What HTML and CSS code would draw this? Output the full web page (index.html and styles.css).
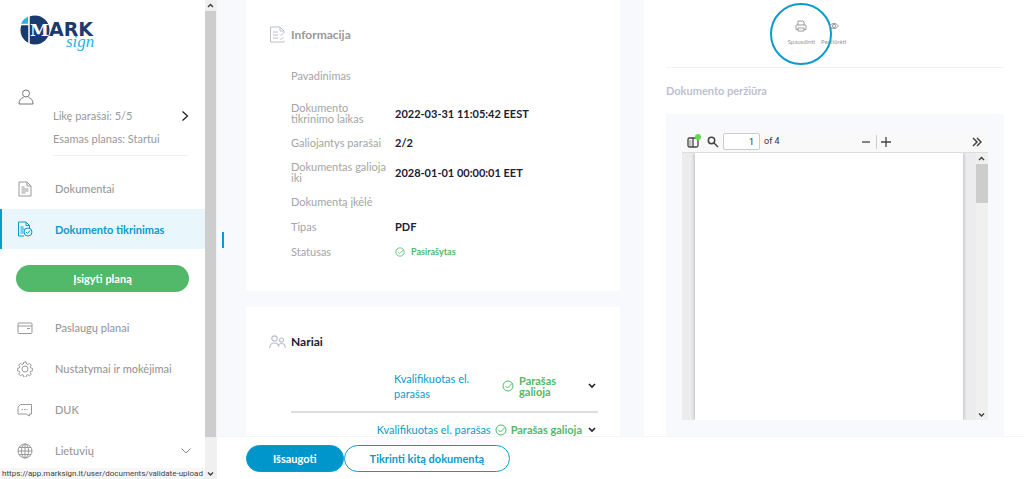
FILE: index.html
```html
<!DOCTYPE html>
<html lang="lt">
<head>
    <meta charset="UTF-8">
    <meta name="viewport" content="width=device-width, initial-scale=1.0">
    <title>MarkSign - Dokumento tikrinimas</title>
    <link rel="stylesheet" href="styles.css">
</head>
<body>
    <aside class="sidebar">
        <div class="sidebar-content">
            <a class="logo" href="#" aria-label="MarkSign">
                <svg width="78" height="44" viewBox="0 0 78 44">
                    <circle cx="15" cy="16" r="14.5" fill="#1b3b70"/>
                    <path d="M9 0H0v10h9z" fill="#fff"/>
                    <path d="M1 10A15 15 0 0 1 8 2.500V10z" fill="#29b2e3"/>
                    <path d="M9 1V31" stroke="#fff" stroke-width="1.500"/>
                    <path d="M1 10.500H9" stroke="#fff" stroke-width="1.500"/>
                    <text class="logo-name" x="10" y="22"><tspan class="logo-m">M</tspan><tspan x="29">ARK</tspan><tspan class="logo-sign" x="46" y="33">sign</tspan></text>
                </svg>
            </a>
            <svg class="user-icon" width="16" height="16" viewBox="0 0 16 16" fill="none" stroke="#777">
                <circle cx="8" cy="4.500" r="3.500"/>
                <path d="M5.500 8.500C3 9 1 11 1 15h14c0-4-2-6-4.500-6.500"/>
            </svg>
            <a class="plan" href="#">
                <span>Likę parašai: 5/5</span>
                <svg width="8" height="12" viewBox="0 0 8 12" fill="none" stroke="#222" stroke-width="1.300"><path d="M1.500 1.500L6.500 6l-5 4.500"/></svg>
                <span>Esamas planas: Startui</span>
            </a>
            <nav>
                <a class="nav-item" href="#">
                    <svg width="16" height="16" viewBox="0 0 16 16" fill="none" stroke="#999"><path d="M2 1h8l4 4v10H2zM10 1v4h4M4.500 6h3M4.500 8h7M4.500 10h7M4.500 12h4"/></svg>
                    Dokumentai
                </a>
                <a class="nav-item active" href="#">
                    <svg width="16" height="16" viewBox="0 0 16 16" fill="none" stroke="#0a9bcd"><path d="M7 15H1.500V1H9l3.500 3.500V7M9 1v3.500h3.500M3.500 6h3M3.500 8h4M3.500 10h3M3.500 12h3"/><circle cx="11" cy="11" r="4"/><path d="M9 11l1.500 1.500L13 9.500"/></svg>
                    Dokumento tikrinimas
                </a>
                <button class="buy-plan" type="button">Įsigyti planą</button>
                <a class="nav-item" href="#">
                    <svg width="16" height="16" viewBox="0 0 16 16" fill="none" stroke="#999"><rect x="1" y="3" width="14" height="10.500" rx="1"/><path d="M1 6h14M10 8.500h3"/></svg>
                    Paslaugų planai
                </a>
                <a class="nav-item" href="#">
                    <svg width="16" height="16" viewBox="0 0 16 16" fill="none" stroke="#999"><circle cx="8" cy="8" r="3"/><path d="M6.800 1h2.400l.4 2 1.300.5 1.700-1.100 1.700 1.700-1.100 1.700.5 1.200 2 .4v2.400l-2 .4-.5 1.200 1.100 1.700-1.700 1.700-1.700-1.100-1.300.5-.4 2H6.800l-.4-2-1.300-.5-1.700 1.100-1.700-1.700 1.100-1.700-.5-1.200-2-.4V7.400l2-.4.5-1.200-1.100-1.700 1.700-1.700 1.700 1.100L6.400 3z"/></svg>
                    Nustatymai ir mokėjimai
                </a>
                <a class="nav-item" href="#">
                    <svg width="16" height="16" viewBox="0 0 16 16" fill="none" stroke="#999"><path d="M3.500 2.500h11v9.500h-2v2L9 12H1V5z"/><path d="M4.500 7.500h6" stroke-dasharray="1.500 1"/></svg>
                    DUK
                </a>
                <a class="nav-item" href="#">
                    <svg width="16" height="16" viewBox="0 0 16 16" fill="none" stroke="#999"><circle cx="8" cy="8" r="7"/><ellipse cx="8" cy="8" rx="3.500" ry="7"/><path d="M8 1v14M1 8h14M2 4.500h12M2 11.500h12"/></svg>
                    Lietuvių
                    <svg class="nav-arrow" width="10" height="6" viewBox="0 0 10 6" fill="none" stroke="#888"><path d="M.5.5L5 5l4.500-4.500"/></svg>
                </a>
            </nav>
        </div>
        <div class="scrollbar">
            <svg class="scroll-arrow" viewBox="0 0 11 11"><path d="M3 7l2.500-2.500L8 7"/></svg>
            <div class="scroll-thumb"></div>
            <svg class="scroll-arrow" viewBox="0 0 11 11"><path d="M3 4.500L5.500 7 8 4.500"/></svg>
        </div>
        <div class="link-status">https://app.marksign.lt/user/documents/validate-upload</div>
    </aside>

    <main class="main">
        <span class="marker"></span>
        <div class="columns">
            <div class="details">
                <section class="card info">
                    <h2 class="card-title muted">
                        <svg width="17" height="17" viewBox="0 0 17 17" fill="none" stroke="#bcbfd0"><path d="M15 7V5l-4-4H1.500v15H15v-1M11 1v4h4M4 6h5M4 9h5M4 12h5M11 8.500l1 1L14.500 7M11 12.500l1 1 2.500-2.500"/></svg>
                        Informacija
                    </h2>
                    <dl class="info-list">
                        <div class="info-row tall"><dt>Pavadinimas</dt><dd></dd></div>
                        <div class="info-row"><dt>Dokumento tikrinimo laikas</dt><dd>2022-03-31 11:05:42 EEST</dd></div>
                        <div class="info-row"><dt>Galiojantys parašai</dt><dd>2/2</dd></div>
                        <div class="info-row"><dt>Dokumentas galioja iki</dt><dd>2028-01-01 00:00:01 EET</dd></div>
                        <div class="info-row"><dt>Dokumentą įkėlė</dt><dd></dd></div>
                        <div class="info-row"><dt>Tipas</dt><dd>PDF</dd></div>
                        <div class="info-row"><dt>Statusas</dt>
                            <dd class="signed">
                                <svg class="check" width="10" height="10" viewBox="0 0 12 12"><circle cx="6" cy="6" r="5"/><path d="M3.500 6l2 2L10 3.500"/></svg>
                                Pasirašytas
                            </dd>
                        </div>
                    </dl>
                </section>

                <section class="card members">
                    <h2 class="card-title">
                        <svg width="17" height="14" viewBox="0 0 17 14" fill="none" stroke="#bcbfd0" stroke-width="1.200"><circle cx="5.500" cy="3.500" r="2.700"/><circle cx="12.500" cy="5" r="2"/><path d="M.8 13c0-3 2-5 4.700-5s4 1.500 4.500 4M9.500 10c1-1 2-1.500 3-1.500 2 0 3.700 1.500 3.700 4.500"/></svg>
                        Nariai
                    </h2>
                    <div class="member">
                        <a class="member-type" href="#">Kvalifikuotas el. parašas</a>
                        <svg class="check" width="12" height="12" viewBox="0 0 12 12"><circle cx="6" cy="6" r="5"/><path d="M3.500 6l2 2L10 3.500"/></svg>
                        <span class="member-status">Parašas galioja</span>
                        <button class="expand" type="button" aria-label="Išskleisti"><svg width="8" height="6" viewBox="0 0 8 6"><path d="M1 1l3 3 3-3"/></svg></button>
                    </div>
                    <div class="member compact">
                        <a class="member-type" href="#">Kvalifikuotas el. parašas</a>
                        <svg class="check" width="12" height="12" viewBox="0 0 12 12"><circle cx="6" cy="6" r="5"/><path d="M3.500 6l2 2L10 3.500"/></svg>
                        <span class="member-status">Parašas galioja</span>
                        <button class="expand" type="button" aria-label="Išskleisti"><svg width="8" height="6" viewBox="0 0 8 6"><path d="M1 1l3 3 3-3"/></svg></button>
                    </div>
                </section>
            </div>

            <section class="preview">
                <div class="actions">
                    <button class="action highlighted" type="button">
                        <svg width="12" height="12" viewBox="0 0 12 12" fill="none" stroke="#999"><path d="M3 5V1h5l1 1v3M3 9.500H1V6q0-1 1-1h8q1 0 1 1v3.500H9M3 8h6v3H3z"/></svg>
                        Spausdinti
                    </button>
                    <button class="action" type="button">
                        <svg width="12" height="12" viewBox="0 0 12 12" fill="none" stroke="#999"><path d="M1.500 6Q6 .8 10.500 6 6 11.200 1.500 6z"/><circle cx="6" cy="6" r="1.600"/></svg>
                        Peržiūrėti
                    </button>
                </div>
                <h2 class="preview-title">Dokumento peržiūra</h2>
                <div class="preview-box">
                    <div class="viewer">
                        <div class="toolbar">
                            <button class="tool panel-toggle" type="button" aria-label="Šoninė juosta"><svg width="12" height="12" viewBox="0 0 12 12" fill="none" stroke="#444" stroke-width="1.300"><rect x="1" y="2" width="10" height="9" rx="1.500"/><path d="M6 2v9"/><path d="M2 5h2.500M2 7h2.500M2 9h2.500" stroke="#888" stroke-width="1"/></svg></button>
                            <button class="tool" type="button" aria-label="Ieškoti"><svg width="12" height="12" viewBox="0 0 12 12" fill="none" stroke="#444" stroke-width="1.500"><circle cx="4.500" cy="4.500" r="3.200"/><path d="M7 7l4 4"/></svg></button>
                            <label class="page-field"><input type="text" value="1" aria-label="Puslapis"> of 4</label>
                            <div class="zoom-tools">
                                <button class="tool" type="button" aria-label="Mažinti"><svg width="10" height="10" viewBox="0 0 10 10" stroke="#444" stroke-width="1.300"><path d="M1 5h8"/></svg></button>
                                <button class="tool" type="button" aria-label="Didinti"><svg width="10" height="10" viewBox="0 0 10 10" stroke="#444" stroke-width="1.300"><path d="M0 5h10M5 0v10"/></svg></button>
                            </div>
                            <button class="tool" type="button" aria-label="Įrankiai"><svg width="10" height="10" viewBox="0 0 10 10" fill="none" stroke="#444" stroke-width="1.500"><path d="M1 1l4 4-4 4M5 1l4 4-4 4"/></svg></button>
                        </div>
                        <div class="viewer-body">
                            <div class="canvas"><div class="page"></div></div>
                            <div class="scrollbar">
                                <svg class="scroll-arrow" viewBox="0 0 11 11"><path d="M3 7l2.500-2.500L8 7"/></svg>
                                <div class="scroll-thumb short"></div>
                                <svg class="scroll-arrow" viewBox="0 0 11 11"><path d="M3 4.500L5.500 7 8 4.500"/></svg>
                            </div>
                        </div>
                    </div>
                </div>
            </section>
        </div>
        <footer class="footer">
            <button class="btn primary" type="button">Išsaugoti</button>
            <button class="btn outline" type="button">Tikrinti kitą dokumentą</button>
        </footer>
    </main>
</body>
</html>
```

FILE: styles.css
```css
* {
    box-sizing: border-box;
}

body {
    margin: 0;
    display: flex;
    height: 100vh;
    overflow: hidden;
    font-family: Lato, "Noto Sans", sans-serif;
    font-size: 11px;
    line-height: 11px;
    color: #1c2033;
    background-color: #f7f9fd;
}

a {
    color: inherit;
    text-decoration: none;
}

button {
    font: inherit;
    color: inherit;
    background: none;
    border: none;
    padding: 0;
}

h2,
dl,
dd {
    margin: 0;
}

svg {
    flex: none;
    display: block;
}

/* Sidebar */
.sidebar {
    position: relative;
    flex: none;
    display: flex;
    width: 217px;
    background-color: #fff;
    border-right: 1px solid #f1f2f6;
    color: #999;
}

.sidebar-content {
    flex: 1;
    padding-top: 14px;
    overflow: hidden;
}

.logo {
    display: block;
    height: 75px;
    padding-left: 20px;
}

.logo-name {
    font: 700 19px "DejaVu Sans", sans-serif;
    fill: #1b3b70;
}

.logo-m {
    font: 700 17px "DejaVu Serif", serif;
    fill: #fff;
}

.logo-sign {
    font: italic 17px "Liberation Serif", serif;
    fill: #29b2e3;
}

.user-icon {
    margin-left: 18px;
}

.plan {
    display: flex;
    flex-wrap: wrap;
    justify-content: space-between;
    row-gap: 11px;
    margin: 5px 16px 12px 53px;
    padding-bottom: 11px;
    border-bottom: 1px solid #f0f0f0;
}

.nav-item {
    display: flex;
    align-items: center;
    gap: 22px;
    height: 41px;
    padding: 0 14px 0 17px;
    font-weight: 500;
}

.nav-item.active {
    height: 40px;
    padding-left: 15px;
    border-left: 2px solid #0a9bcd;
    background-color: #e9f6fb;
    color: #0a9bcd;
    font-weight: 700;
}

.nav-arrow {
    margin-left: auto;
}

.buy-plan {
    display: block;
    width: calc(100% - 32px);
    height: 27px;
    margin: 16px 16px 15px;
    border-radius: 14px;
    background-color: #52b86a;
    color: #fff;
    font-weight: 700;
}

.link-status {
    position: absolute;
    left: 0;
    bottom: 0;
    width: 205px;
    padding-left: 2px;
    background-color: #f6f6f6;
    color: #444;
    font-family: Roboto, sans-serif;
    font-size: 8px;
    white-space: nowrap;
}

.scrollbar {
    flex: none;
    display: flex;
    flex-direction: column;
    width: 11px;
    background-color: #f0f0f0;
}

.scroll-arrow {
    width: 11px;
    height: 11px;
    fill: none;
    stroke: #444;
    stroke-width: 1.5;
}

.scroll-thumb {
    height: 89%;
    margin-bottom: auto;
    background-color: #cdcdcd;
}

.scroll-thumb.short {
    height: 39px;
}

/* Main area */
.main {
    position: relative;
    flex: 1;
    min-width: 0;
    display: flex;
    flex-direction: column;
}

.marker {
    position: absolute;
    left: 5px;
    top: 232px;
    width: 2px;
    height: 16px;
    background-color: #0a9bcd;
}

.columns {
    flex: 1;
    min-height: 0;
    display: grid;
    grid-template-columns: minmax(0, 1fr) 380px;
    grid-template-rows: minmax(0, 1fr);
    gap: 24px;
    padding-left: 29px;
}

.details {
    display: flex;
    flex-direction: column;
    gap: 16px;
    overflow: hidden;
}

.card {
    flex: none;
    padding: 26px 22px 33px 23px;
    background-color: #fff;
}

.card-title {
    display: flex;
    align-items: center;
    gap: 5px;
    font-size: 12px;
    line-height: 17px;
    font-weight: 700;
}

.card-title.muted {
    color: #999;
}

.info-list {
    display: flex;
    flex-direction: column;
    gap: 12px;
    margin: 27px 0 0 22px;
}

.info-row {
    display: grid;
    grid-template-columns: 96px 1fr;
    column-gap: 8px;
    align-items: center;
    min-height: 13px;
}

.info-row.tall {
    min-height: 20px;
    align-items: start;
}

.info-row dt {
    color: #a5a5a5;
}

.info-row dd {
    font-weight: 700;
}

.info-row .signed {
    display: flex;
    align-items: center;
    gap: 6px;
    color: #52b86a;
    font-size: 9px;
}

.check {
    fill: none;
    stroke: #52b86a;
}

.member {
    display: grid;
    grid-template-columns: 103px 12px 62px 12px;
    justify-content: end;
    align-items: center;
    column-gap: 5px;
    margin: 21px 0 0 22px;
    padding-bottom: 10px;
    border-bottom: 2px solid #ddd;
}

.member.compact {
    display: flex;
    column-gap: 4px;
    margin-top: 0;
    padding-top: 9px;
}

.member-type {
    color: #0a9bcd;
    line-height: 15px;
}

.member-status {
    color: #52b86a;
    font-weight: 700;
}

.expand {
    padding: 2px;
}

.expand svg {
    fill: none;
    stroke: #1c2033;
    stroke-width: 1.6;
}

/* Preview */
.preview {
    display: flex;
    flex-direction: column;
    padding: 0 20px 0 22px;
    background-color: #fff;
}

.actions {
    display: flex;
    align-items: center;
    gap: 6px;
    height: 68px;
    padding-left: 36%;
    border-bottom: 1px solid #f2f2f5;
}

.action {
    position: relative;
    display: flex;
    flex-direction: column;
    align-items: center;
    gap: 4px;
    color: #999;
    font-size: 6px;
}

.action.highlighted::after {
    content: "";
    position: absolute;
    left: 50%;
    top: 50%;
    width: 58px;
    height: 58px;
    border: 2px solid #0a9bcd;
    border-radius: 50%;
    transform: translate(-50%, -50%);
}

.preview-title {
    margin: 17px 0;
    color: #bcbfd0;
    font-size: 11px;
    line-height: 12px;
}

.preview-box {
    flex: 1;
    min-height: 0;
    padding: 17px 16px 16px;
    background-color: #f7f9fd;
}

.viewer {
    display: flex;
    flex-direction: column;
    height: 100%;
}

.toolbar {
    display: flex;
    align-items: center;
    gap: 8px;
    height: 22px;
    padding: 0 6px 0 5px;
    border-bottom: 1px solid #ddd;
    background-color: #f9f9fa;
    color: #333;
    font-family: Roboto, sans-serif;
    font-size: 9px;
}

.panel-toggle {
    position: relative;
}

.panel-toggle::after {
    content: "";
    position: absolute;
    right: -2px;
    top: -2px;
    width: 6px;
    height: 6px;
    border-radius: 50%;
    background-color: #5fdc50;
}

.page-field {
    display: flex;
    align-items: center;
    gap: 4px;
    margin-left: -4px;
}

.page-field input {
    width: 37px;
    height: 17px;
    padding: 0 5px;
    border: 1px solid #ccc;
    border-radius: 2px;
    font: inherit;
    color: inherit;
    text-align: right;
}

.zoom-tools {
    display: flex;
    align-items: center;
    margin: 0 auto;
}

.zoom-tools .tool + .tool {
    margin-left: 5px;
    padding: 2px 0 2px 4px;
    border-left: 1px solid #ccc;
}

.viewer-body {
    flex: 1;
    display: flex;
}

.viewer-body .scrollbar {
    width: 12px;
}

.canvas {
    flex: 1;
    display: flex;
    padding: 0 13px;
    background-color: #ececee;
}

.page {
    flex: 1;
    background-color: #fff;
    box-shadow: 0 0 4px rgba(0, 0, 0, 0.3);
    clip-path: inset(0 -4px);
}

/* Footer */
.footer {
    flex: none;
    display: flex;
    align-items: center;
    height: 43px;
    padding-left: 29px;
    border-top: 1px solid #f3f4f8;
    background-color: #fff;
}

.btn {
    height: 27px;
    padding: 0 26px;
    border: 1px solid #0a9bcd;
    border-radius: 14px;
    font-weight: 700;
}

.btn.primary {
    background-color: #0096cc;
    color: #fff;
}

.btn.outline {
    padding: 0 25px;
    color: #0a9bcd;
}
```
